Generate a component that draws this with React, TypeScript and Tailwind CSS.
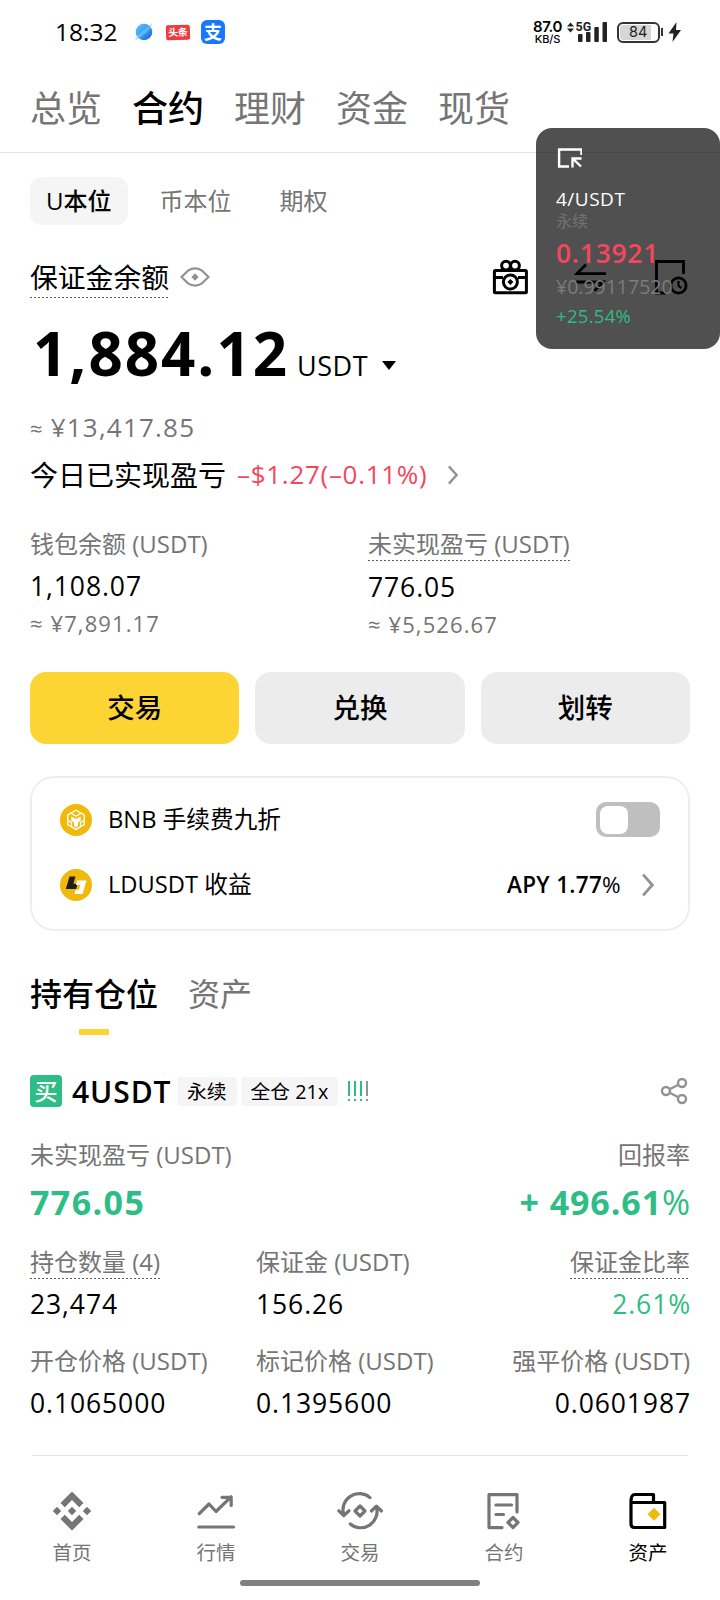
import type { ReactNode } from 'react';
import clsx from 'clsx';

const TOP_TABS = ['总览', '合约', '理财', '资金', '现货'];

function ChevronRight({ className, strokeWidth }: { className: string; strokeWidth: number }) {
    return (
        <svg viewBox="0 0 12 22" fill="none" stroke="#929292" strokeWidth={strokeWidth} className={className}>
            <path d="M1.5 1.5 L10 11 L1.5 20.5" />
        </svg>
    );
}

function StatusBar() {
    return (
        <div className="flex h-16 items-center pr-[38px] pl-[55px]">
            <span className="w-[62px] text-[24.5px] leading-8 font-medium whitespace-nowrap">18:32</span>
            <svg viewBox="0 0 20 20" className="ml-[17px] h-5 w-5">
                <defs>
                    <linearGradient id="planet" x1="0" y1="0" x2="1" y2="1">
                        <stop offset="0" stopColor="#5cc8ff" />
                        <stop offset="0.5" stopColor="#3d9cf5" />
                        <stop offset="1" stopColor="#0b5fc9" />
                    </linearGradient>
                </defs>
                <circle cx="10" cy="10" r="8.3" fill="url(#planet)" />
                <path d="M1 19 C1 13 9 10 18 1 C18 8 9 13 1 19Z" fill="#7fd0ff" opacity="0.55" />
            </svg>
            <span className="ml-3 flex h-[15px] w-6 -rotate-2 items-center justify-center rounded-[2px] bg-[#ee3b40] text-[10px] font-bold text-white">
                头条
            </span>
            <span className="ml-[11px] flex h-6 w-6 items-center justify-center rounded-[6px] bg-[#1677ff] text-[18px] leading-6 font-bold text-white">
                支
            </span>

            <div className="ml-auto flex items-center text-[#222]">
                <div className="flex w-[31px] flex-col items-center text-black">
                    <span className="font-['Inter'] text-[15px] leading-[15px] font-semibold tracking-[-0.4px]">87.0</span>
                    <span className="font-['Inter'] text-[11px] leading-[11px] font-medium tracking-[-0.1px]">KB/S</span>
                </div>
                <svg viewBox="0 0 42 24" className="ml-[3px] h-6 w-[42px]" fill="#222">
                    <path d="M1 6.5 L4.5 2.5 L8 6.5Z M1 8.5 L4.5 12.5 L8 8.5Z" />
                    <text x="9.5" y="11" fontFamily="Roboto" fontSize="12.5" fontWeight="700">
                        5G
                    </text>
                    <rect x="12" y="14" width="4.5" height="8" rx="1" />
                    <rect x="20" y="12" width="4.5" height="10" rx="1" />
                    <rect x="28.3" y="7" width="4.5" height="15" rx="1" />
                    <rect x="36.5" y="2" width="4.5" height="20" rx="1" />
                </svg>
                <div className="ml-[9px] flex h-[21px] w-[43px] items-center justify-center rounded-[6px] border-2 border-[#333] p-[1px]">
                    <span className="flex h-full w-full items-center justify-start rounded-[3px] bg-linear-to-r from-[#d6d6d6] from-85% to-white to-85% pl-[9px] font-['Inter'] text-[14.5px] leading-none">
                        84
                    </span>
                </div>
                <span className="ml-[1px] h-2 w-[2px] bg-[#333]" />
                <svg viewBox="0 0 14 20" className="ml-[5px] h-5 w-[14px]" fill="#222">
                    <path d="M8.5 0 L0.5 11.5 H5.5 L4.5 20 L13 8 H8Z" />
                </svg>
            </div>
        </div>
    );
}

function FloatingTicker() {
    return (
        <div className="absolute top-32 right-0 flex h-[221px] w-[184px] flex-col rounded-2xl bg-black/[.685] pt-5 pl-5">
            <svg viewBox="0 0 26 20" className="h-5 w-[26px]" fill="none" stroke="#fff" strokeWidth="2.4">
                <path d="M25.5 7 V1.5 H3.1 V18.5 H13" />
                <path d="M25.5 10.5 H16.5 V19.5 M17 10.8 L25 18.5" />
            </svg>
            <div className="mt-[19px] text-[19px] leading-[24px] font-medium tracking-[0.5px] text-white">4/USDT</div>
            <div className="text-[16px] leading-[20px] text-[#737373]">永续</div>
            <div className="mt-[5px] text-[26.5px] leading-[34px] font-semibold tracking-[0.7px] text-[#f6465d]">0.13921</div>
            <div className="mt-[4px] text-[19.5px] leading-[26px] text-[#7c7c7c]">¥0.99117520</div>
            <div className="mt-[3px] text-[18.5px] leading-[26px] font-medium tracking-[0.3px] text-[#2ebd85]">+25.54%</div>
        </div>
    );
}

function HeaderActions() {
    return (
        <div className="ml-auto flex items-center gap-[45px]">
            <svg viewBox="0 0 36 36" className="h-9 w-9" fill="none" stroke="#000" strokeWidth="3">
                <rect x="2.4" y="11.5" width="32" height="22.3" rx="1" />
                <path d="M2.4 18.5 H11 M26 18.5 H34.4" />
                <circle cx="18.4" cy="23" r="7" />
                <circle cx="14" cy="6.6" r="4.4" />
                <circle cx="23" cy="6.6" r="4.4" />
                <path d="M18.4 20 L21.4 23 L18.4 26 L15.4 23Z" fill="#000" stroke="none" />
            </svg>
            <svg viewBox="0 0 36 36" className="h-9 w-9" fill="none" stroke="#000" strokeWidth="2.8">
                <path d="M33 14.6 H4 L13 5.4" />
                <path d="M3 23 H30 L21.5 31.8" />
            </svg>
            <svg viewBox="0 0 36 36" className="h-9 w-9 -translate-x-[2px]" fill="none" stroke="#000" strokeWidth="2.8">
                <path d="M14 34 H4.5 V2.5 H31.5 V15" />
                <circle cx="26.5" cy="26.5" r="7.6" />
                <path d="M26.5 22 V27 L29.5 29" strokeWidth="2.2" />
            </svg>
        </div>
    );
}

function DottedLine() {
    return <span className="block h-px w-full bg-[repeating-linear-gradient(90deg,#5c5c5c_0_2px,transparent_2px_4px)]" />;
}

function BalanceHeader() {
    return (
        <section className="px-[30px]">
            <div className="flex h-[66px] items-center">
                <span className="pt-px text-[27.8px] leading-[39px]">
                    保证金余额
                    <DottedLine />
                </span>
                <svg viewBox="0 0 30 20" className="ml-[11px] h-5 w-[30px]" fill="none" stroke="#929292" strokeWidth="2.2">
                    <path d="M1.5 10 L8 3.6 Q15 -0.8 22 3.6 L28.5 10 L22 16.4 Q15 20.8 8 16.4Z" />
                    <path d="M15 6.3 L18.7 10 L15 13.7 L11.3 10Z" fill="#929292" stroke="none" />
                </svg>
                <HeaderActions />
            </div>
            <div className="mt-px flex h-[90px] items-baseline">
                <span className="pl-[3px] text-[60px] leading-[84px] font-bold tracking-[2px]">1,884.12</span>
                <span className="ml-[8px] text-[27px] font-medium tracking-[0.5px]">USDT</span>
                <svg viewBox="0 0 14 9" className="ml-[14px] h-[9px] w-[14px] -translate-y-[6px]">
                    <path d="M0 0 H14 L7 9Z" />
                </svg>
            </div>
            <div className="h-[49px] text-[26px] leading-[52px] tracking-[1.2px] text-[#757575]">
                <span className="text-[22px]">≈ </span>¥13,417.85
            </div>
            <div className="flex h-12 items-center pt-px text-[28px]">
                今日已实现盈亏
                <span className="ml-[11px] text-[26px] tracking-[0.7px] text-[#f6465d]">–$1.27(–0.11%)</span>
                <ChevronRight className="ml-[20px] h-[20px] w-[12px]" strokeWidth={2.6} />
            </div>
        </section>
    );
}

function Label({ children, underlined }: { children: ReactNode; underlined?: boolean }) {
    return (
        <span className="inline-block h-[33px] text-[24px] leading-[32px] whitespace-nowrap text-[#757575]">
            {children}
            {underlined && <DottedLine />}
        </span>
    );
}

function BalanceSplit() {
    return (
        <section className="mt-[30px] grid grid-cols-[338px_1fr] px-[30px]">
            <div className="flex flex-col items-start">
                <Label>钱包余额 (USDT)</Label>
                <span className="mt-[6px] text-[26.5px] leading-[38px] tracking-[0.9px]">1,108.07</span>
                <span className="mt-[2px] text-[22px] leading-[32px] tracking-[1.1px] text-[#757575]">≈ ¥7,891.17</span>
            </div>
            <div className="flex flex-col items-start">
                <Label underlined>未实现盈亏 (USDT)</Label>
                <span className="mt-[7px] text-[26.5px] leading-[38px] tracking-[0.9px]">776.05</span>
                <span className="mt-[2px] text-[22px] leading-[32px] tracking-[1.1px] text-[#757575]">≈ ¥5,526.67</span>
            </div>
        </section>
    );
}

function ActionButtons() {
    return (
        <section className="mt-[32px] grid grid-cols-3 gap-4 px-[30px]">
            {['交易', '兑换', '划转'].map((label, i) => (
                <button
                    key={label}
                    type="button"
                    className={clsx(
                        'h-[72px] rounded-2xl pb-px text-[27.5px] font-medium',
                        i === 0 ? 'bg-[#fcd535]' : 'bg-[#ececec]',
                    )}
                >
                    {label}
                </button>
            ))}
        </section>
    );
}

function PerksCard() {
    return (
        <section className="mx-[30px] mt-8 flex h-[155px] flex-col rounded-3xl border-2 border-[#eee] pt-[9px] pr-7 pl-7 text-[23.7px]">
            <div className="flex h-[65px] items-center">
                <svg viewBox="0 0 32 32" className="h-8 w-8">
                    <circle cx="16" cy="16" r="16" fill="#f0b90b" />
                    <path
                        d="M16 6.3 L24.2 11 V20.6 L16 25.4 L7.8 20.6 V11Z M11.5 9.5 L16 12.2 L20.5 9.5 M8 16.5 L11.5 18.5 V22.5 M24 16.5 L20.5 18.5 V22.5"
                        fill="none"
                        stroke="#fff"
                        strokeWidth="1.3"
                    />
                    <path d="M11.2 12.4 L16 15 L20.8 12.4 V16.6 L18 18.4 V22 L16 23.2 L14 22 V18.4 L11.2 16.6Z" fill="#fff" />
                </svg>
                <span className="ml-4">BNB 手续费九折</span>
                <span className="ml-auto flex h-[35px] w-[64px] items-center rounded-[10px] bg-[#bfbfbf] p-1">
                    <span className="h-[28px] w-[28px] rounded-[8px] bg-white" />
                </span>
            </div>
            <div className="flex h-[65px] items-center">
                <svg viewBox="0 0 32 32" className="h-8 w-8">
                    <circle cx="16" cy="16" r="16" fill="#f0b90b" />
                    <path d="M9.5 7.5 H15.5 L13.4 14.8 H17.6 L16.2 20 H5.8Z" fill="#1e1e1e" />
                    <path d="M17.2 11.5 H26.5 L22.5 25 H14.5 L15.7 20.8 H19 L20.4 16 H15.9Z" fill="#fff" />
                </svg>
                <span className="ml-4">LDUSDT 收益</span>
                <span className="ml-auto text-[22.5px] font-semibold tracking-[0.3px]">
                    APY 1.77<span className="font-normal">%</span>
                </span>
                <ChevronRight className="mr-[5px] ml-[20px] h-[24px] w-[14px]" strokeWidth={2.6} />
            </div>
        </section>
    );
}

function SectionTabs() {
    return (
        <section className="mt-[38px] flex gap-[30px] px-[30px] text-[32px] leading-[50px]">
            <div className="flex flex-col items-center font-medium">
                持有仓位
                <span className="mt-[10px] h-[6px] w-[30px] rounded-[1px] bg-[#fcd535]" />
            </div>
            <div className="text-[#757575]">资产</div>
        </section>
    );
}

interface FieldProps {
    label: string;
    value: string;
    underlined?: boolean;
    align?: 'left' | 'right';
    green?: boolean;
}

function Field({ label, value, underlined, align = 'left', green }: FieldProps) {
    return (
        <div className={clsx('flex flex-col', align === 'right' ? 'items-end' : 'items-start')}>
            <Label underlined={underlined}>{label}</Label>
            <span
                className={clsx(
                    'mt-[6px] text-[26.5px] leading-[38px] tracking-[0.9px]',
                    align === 'right' && '-mr-px',
                    green && 'text-[#2ebd85]',
                )}
            >
                {value}
            </span>
        </div>
    );
}

function PositionCard() {
    return (
        <section className="mt-[36px] px-[30px]">
            <div className="flex h-10 items-center">
                <span className="flex h-8 w-8 items-center justify-center rounded-[4px] bg-[#2ebd85] text-[23px] leading-8 font-medium text-white">
                    买
                </span>
                <span className="ml-[10px] w-[99px] text-[30px] font-semibold tracking-[0.9px]">4USDT</span>
                <span className="ml-[6px] h-[29px] rounded-[4px] bg-[#f5f5f5] px-[10px] text-[19.8px] leading-[29px]">永续</span>
                <span className="ml-1 h-[29px] rounded-[4px] bg-[#f5f5f5] px-[10px] text-[19.8px] leading-[29px]">全仓 21x</span>
                <svg viewBox="0 0 24 20" className="ml-[8px] h-5 w-6" strokeWidth="2">
                    <path d="M3 0 V15 M3 18 V20 M9 0 V15 M9 18 V20 M15 0 V15 M15 18 V20" stroke="#2ebd85" />
                    <path d="M21 0 V15 M21 18 V20" stroke="#929292" />
                </svg>
                <svg viewBox="0 0 28 28" className="mr-[2px] ml-auto h-7 w-7" fill="none" stroke="#929292" strokeWidth="2.4">
                    <circle cx="6" cy="14" r="4" />
                    <circle cx="22" cy="6" r="4" />
                    <circle cx="22" cy="22" r="4" />
                    <path d="M9.6 12.2 L18.4 7.8 M9.6 15.8 L18.4 20.2" />
                </svg>
            </div>
            <div className="mt-[28px] flex justify-between">
                <Label>未实现盈亏 (USDT)</Label>
                <Label>回报率</Label>
            </div>
            <div className="mt-[7px] flex justify-between text-[34px] leading-[46px] font-bold text-[#2ebd85]">
                <span className="tracking-[1.4px]">776.05</span>
                <span className="-mr-px tracking-[0.9px]">
                    + 496.61<span className="font-medium">%</span>
                </span>
            </div>
            <div className="mt-[21px] grid grid-cols-[226px_1fr_1fr] gap-y-[22px]">
                <Field label="持仓数量 (4)" value="23,474" underlined />
                <Field label="保证金 (USDT)" value="156.26" />
                <Field label="保证金比率" value="2.61%" underlined align="right" green />
                <Field label="开仓价格 (USDT)" value="0.1065000" />
                <Field label="标记价格 (USDT)" value="0.1395600" />
                <Field label="强平价格 (USDT)" value="0.0601987" align="right" />
            </div>
        </section>
    );
}

const NAV_ITEMS: { label: string; icon: ReactNode }[] = [
    {
        label: '首页',
        icon: (
            <g fill="currentColor" stroke="none">
                <path d="M22 2.5 L33.5 14 L29.2 18.3 L22 11.1 L14.8 18.3 L10.5 14Z" />
                <path d="M22 41.5 L33.5 30 L29.2 25.7 L22 32.9 L14.8 25.7 L10.5 30Z" />
                <path d="M22 17.8 L26.2 22 L22 26.2 L17.8 22Z M7 17.8 L11.2 22 L7 26.2 L2.8 22Z M37 17.8 L41.2 22 L37 26.2 L32.8 22Z" />
            </g>
        ),
    },
    {
        label: '行情',
        icon: <path d="M5.3 24.7 L15 15 L22 22.5 L37 7.8 M28 8.3 H37.2 V16.5 M4.8 38 H39.5" />,
    },
    {
        label: '交易',
        icon: (
            <>
                <path d="M32 8.6 A16.3 16.3 0 0 0 5.8 26 M0.8 21.8 L5.8 26.6 L11 21.8" />
                <path d="M12.3 35 A16.3 16.3 0 0 0 38.4 18 M33.4 22 L38.4 17.2 L43.4 22" />
                <path d="M22 17 L27 22 L22 27 L17 22Z" />
            </>
        ),
    },
    {
        label: '合约',
        icon: (
            <>
                <path d="M20 38.6 H7 V5.6 H35 V23 M14 16 H29.5 M14 25.5 H21.5" />
                <path d="M31 28.5 L36 33.5 L31 38.5 L26 33.5Z" />
            </>
        ),
    },
    {
        label: '资产',
        icon: (
            <>
                <path d="M5 13.5 V35 Q5 38.5 8.5 38.5 H38.7 V13.5 H5 Q5 5.5 8.5 5.5 H27.5 V13" />
                <path d="M28 18.8 L34.5 25.3 L28 31.8 L21.5 25.3Z" fill="#f0b90b" stroke="none" />
            </>
        ),
    },
];

function BottomNav() {
    return (
        <nav className="mt-auto">
            <div className="mx-8 h-px bg-[#e6e6e6]" />
            <div className="grid h-[124px] grid-cols-5 pt-[33px]">
                {NAV_ITEMS.map(({ label, icon }) => (
                    <div
                        key={label}
                        className={clsx('flex flex-col items-center', label === '资产' ? 'text-black' : 'text-[#757575]')}
                    >
                        <svg
                            viewBox="0 0 44 44"
                            className="h-11 w-11 overflow-visible"
                            fill="none"
                            stroke="currentColor"
                            strokeWidth="3.2"
                            strokeLinecap="round"
                            strokeLinejoin="round"
                        >
                            {icon}
                        </svg>
                        <span className="mt-[6px] text-[19.5px] leading-[28px]">{label}</span>
                    </div>
                ))}
            </div>
            <div className="mx-auto mb-[14px] h-[6px] w-60 rounded-full bg-[#808080]" />
        </nav>
    );
}

export default function App() {
    return (
        <div className="relative flex h-[1600px] w-[720px] flex-col overflow-hidden bg-white font-['Open_Sans','Noto_Sans_CJK_SC',sans-serif] text-black">
            <StatusBar />
            <div className="flex h-[89px] items-center gap-[30px] border-b border-[#e6e6e6] px-[30px] pt-[2px] text-[36px]">
                {TOP_TABS.map((tab) => (
                    <span key={tab} className={tab === '合约' ? 'font-medium' : 'text-[#757575]'}>
                        {tab}
                    </span>
                ))}
            </div>
            <div className="mt-6 flex h-12 items-center gap-[16px] px-[30px] text-[24px] text-[#757575]">
                <span className="flex h-12 items-center rounded-xl bg-[#f5f5f5] px-4 font-medium text-black">U本位</span>
                <span className="px-4">币本位</span>
                <span className="px-4">期权</span>
            </div>
            <div className="h-[19px]" />
            <BalanceHeader />
            <BalanceSplit />
            <ActionButtons />
            <PerksCard />
            <SectionTabs />
            <PositionCard />
            <BottomNav />
            <FloatingTicker />
        </div>
    );
}
